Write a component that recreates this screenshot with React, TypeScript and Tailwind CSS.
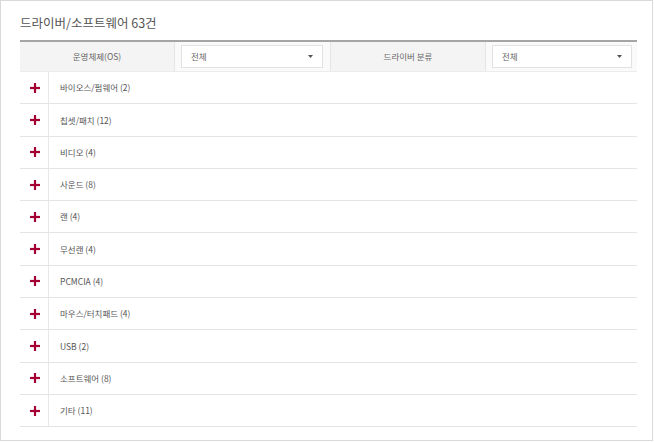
import React from "react";

const rows = [
  "바이오스/펌웨어 (2)",
  "칩셋/패치 (12)",
  "비디오 (4)",
  "사운드 (8)",
  "랜 (4)",
  "무선랜 (4)",
  "PCMCIA (4)",
  "마우스/터치패드 (4)",
  "USB (2)",
  "소프트웨어 (8)",
  "기타 (11)",
];

function Plus() {
  return (
    <svg width="10" height="10" viewBox="0 0 10 10">
      <rect x="3.9" y="0" width="2.2" height="10" fill="#a50034" />
      <rect x="0" y="3.9" width="10" height="2.2" fill="#a50034" />
    </svg>
  );
}

function Select() {
  return (
    <div className="flex h-[23px] w-full items-center justify-between border border-[#e2e2e2] bg-white pl-[9px] pr-[9px]">
      <span className="text-[8.5px] text-[#666]">전체</span>
      <svg width="5" height="3" viewBox="0 0 5 3">
        <path d="M0 0 L5 0 L2.5 3 Z" fill="#555" />
      </svg>
    </div>
  );
}

export default function App() {
  return (
    <div
      className="h-[441px] w-[653px] border border-[#d9d9d9] bg-white"
      style={{ fontFamily: '"Noto Sans CJK KR", "Noto Sans", sans-serif' }}
    >
      <div className="pl-[19px] pr-[15px] pt-[12px]">
        <h2 className="h-[27px] text-[12.5px] leading-[20px] text-[#555]">드라이버/소프트웨어 63건</h2>
        <div className="border-t-2 border-[#a5a5a5]">
          <div className="grid h-[30px] grid-cols-[154px_157px_154px_1fr] border-b border-[#ececec]">
            <div className="flex items-center justify-center bg-[#f4f4f4] text-[8.5px] text-[#666]">운영체제(OS)</div>
            <div className="flex items-center border-l border-r border-[#e6e6e6] bg-[#fafafa] pl-[6px] pr-[7px]">
              <Select />
            </div>
            <div className="flex items-center justify-center bg-[#f4f4f4] text-[8.5px] text-[#666]">드라이버 분류</div>
            <div className="flex items-center border-l border-[#e6e6e6] bg-[#fafafa] pl-[6px] pr-[5px]">
              <Select />
            </div>
          </div>
          {rows.map((r) => (
            <div key={r} className="flex h-[32.3px] border-b-[1.5px] border-[#e4e4e4]">
              <div className="flex w-[29px] items-center justify-center border-r border-[#e8e8e8] pl-[1px]">
                <Plus />
              </div>
              <div className="flex items-center pl-[11px] text-[8.5px] text-[#555]">{r}</div>
            </div>
          ))}
        </div>
      </div>
    </div>
  );
}
